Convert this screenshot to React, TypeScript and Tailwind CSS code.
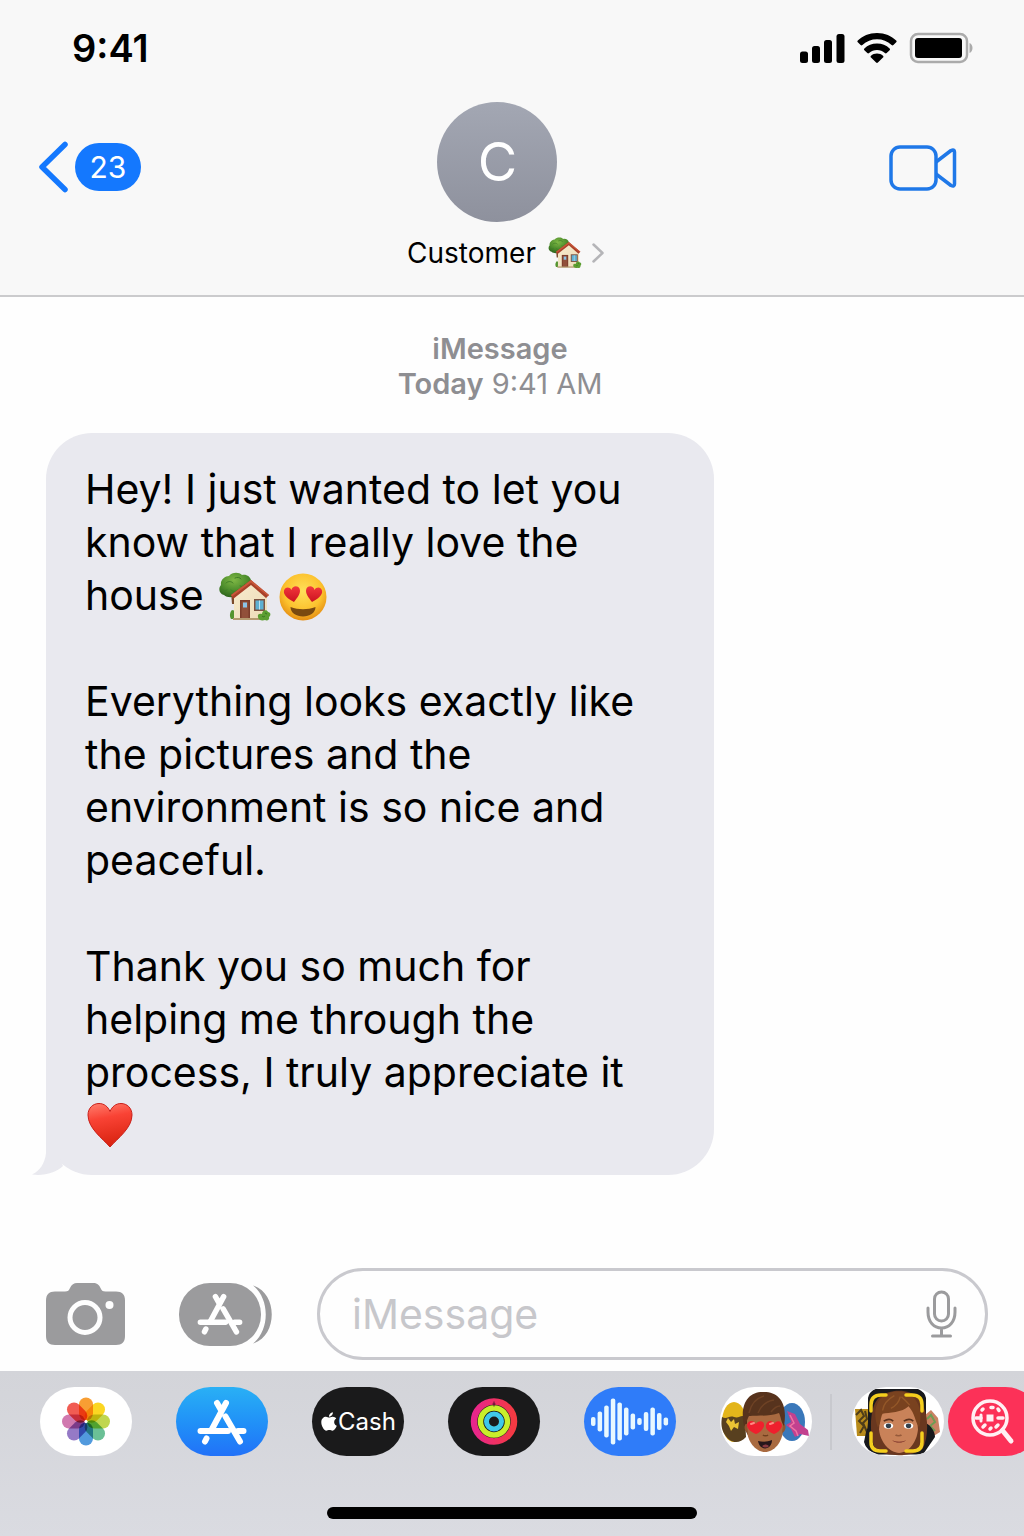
import React, { useState } from 'react';
import { FaApple } from 'react-icons/fa';

interface IconProps {
    className?: string;
}

const contact = {
    name: 'Customer',
    initial: 'C',
    unread: 23
};

const HouseEmoji: React.FC<IconProps> = ({ className }) => (
    <svg viewBox="0 0 52 50" className={className} role="img" aria-label="house with garden">
        <defs>
            <radialGradient id="tree" cx="45%" cy="30%" r="70%">
                <stop offset="0" stopColor="#7fb845" />
                <stop offset="0.6" stopColor="#4d8d2c" />
                <stop offset="1" stopColor="#2f661d" />
            </radialGradient>
            <linearGradient id="wall" x1="0" y1="0" x2="1" y2="1">
                <stop offset="0" stopColor="#f8ebcd" />
                <stop offset="1" stopColor="#ecdcb8" />
            </linearGradient>
        </defs>
        <path d="M12 20h6v12h-5z" fill="#7a4a2b" />
        <path d="M5 23C0 22-1 16 2 13 1 8 6 4 10 4c3-4 10-4 13-1 5-1 8 2 9 5 2 5 0 9-4 11-2 4-7 5-10 4-3 3-10 3-13 0z" fill="url(#tree)" />
        <path d="M7 11c2-2 5-2 7 0M16 6c2-1 5-1 6 1M12 18c2 2 5 2 7 0M21 14c2 1 4 0 5-2M4 18c1 1 3 1 4 0" fill="none" stroke="#3f7d27" strokeLinecap="round" />
        <path d="M12 47c-2-3-1-7 1-9l4 1v8z" fill="#55952f" />
        <path d="M15 24 32 10l16 14v23H15z" fill="url(#wall)" />
        <path d="M32 8 12 23l2 4 18-14 15 13 3-3z" fill="#a84029" />
        <path d="M32 8 12 23l1 1.500L32 10.500l17 13.500 1-1z" fill="#c9573a" />
        <path d="M21 28h10v19H21z" fill="#7b3d2b" />
        <path d="M22.500 29.500h7V46h-7z" fill="#91503a" />
        <path d="M24 30.500h4v5h-4z" fill="#8bc4e8" />
        <path d="M35 27h11v12H35z" fill="#7d5442" />
        <path d="M36.500 28.500h8v9h-8z" fill="#5eb0d2" />
        <path d="M40.500 28.500v9" stroke="#d6eef6" strokeWidth="0.8" />
        <path d="M14 46h35v2H14z" fill="#b49b70" />
        <path d="M39 45c-1-3 2-4 4-3 0-4 5-5 6-2 3 0 3 4 1 5 1 3-2 4-4 3-3 1-7 0-7-3z" fill="#5c9e31" />
        <path d="M43 44c1 1 2 1 3 0M46 41l2 1" fill="none" stroke="#377420" />
    </svg>
);

const HeartEyesEmoji: React.FC<IconProps> = ({ className }) => (
    <svg viewBox="0 0 48 48" className={className} role="img" aria-label="smiling face with heart eyes">
        <defs>
            <radialGradient id="face" cx="50%" cy="38%" r="62%">
                <stop offset="0" stopColor="#ffe05a" />
                <stop offset="0.65" stopColor="#fcc22e" />
                <stop offset="1" stopColor="#e58e13" />
            </radialGradient>
            <linearGradient id="eye" x1="0" y1="0" x2="0" y2="1">
                <stop offset="0" stopColor="#f2383c" />
                <stop offset="1" stopColor="#cc1220" />
            </linearGradient>
        </defs>
        <circle cx="24" cy="24" r="23.500" fill="url(#face)" />
        <path d="M15 29C9 26 4 22 5 17.500 6 14 10.500 13.500 12.500 17c.8-4 6-5 8-1.500C22.500 20 18 25 15 29z" fill="url(#eye)" />
        <path d="M33 29c6-3 11-7 10-11.500-1-3.500-5.500-4-7.500-.5-.8-4-6-5-8-1.500C25.500 20 30 25 33 29z" fill="url(#eye)" />
        <path d="M11.500 34c8 3 17 3 25 0 0 6-6 9.500-12.500 9.500S11.500 40 11.500 34z" fill="#7a4a10" />
    </svg>
);

const HeartEmoji: React.FC<IconProps> = ({ className }) => (
    <svg viewBox="0 0 46 46" className={className} role="img" aria-label="red heart">
        <defs>
            <linearGradient id="heart" x1="0.2" y1="0" x2="0.4" y2="1">
                <stop offset="0" stopColor="#ff7a6a" />
                <stop offset="0.35" stopColor="#f94335" />
                <stop offset="1" stopColor="#d8220f" />
            </linearGradient>
        </defs>
        <path d="M23 45C15 36 1 26 1 13 1 6 6 1.500 12 1.500c5 0 9 3 11 8 2-5 6-8 11-8 6 0 11 4.500 11 11.500 0 13-14 23-22 32z" fill="url(#heart)" stroke="#c9201a" strokeWidth="1" />
    </svg>
);

const AppStoreGlyph: React.FC<IconProps> = ({ className }) => (
    <svg viewBox="0 0 50 46" className={className} fill="none" stroke="currentColor" strokeWidth="6" strokeLinecap="round" aria-hidden="true">
        <path d="M29 4 14.500 31M20 4l4 7M28.500 17.500 43 42.500M9.500 39.500 8 42.500" />
        <path d="M3.500 32H31M41 32h5.500" />
    </svg>
);

const StatusBar: React.FC = () => (
    <div className="flex h-24 items-center justify-between pl-[72px] pr-[51px]">
        <span className="text-[38px] font-semibold leading-10">9:41</span>
        <div className="flex items-center gap-3">
            <svg viewBox="0 0 45 30" className="h-[30px] w-[45px]" aria-label="Signal">
                <rect x="0" y="18.500" width="8" height="11.500" rx="2.500" />
                <rect x="12" y="13" width="8" height="17" rx="2.500" />
                <rect x="24" y="7" width="8" height="23" rx="2.500" />
                <rect x="36.500" y="1" width="8" height="29" rx="2.500" />
            </svg>
            <svg viewBox="0 0 40 30" className="h-[30px] w-10" aria-label="Wi-Fi">
                <path d="M20 0C12 0 5.500 3 .8 7.500c-.6.600-.6 1.200 0 1.800L3.600 12c.6.500 1.200.5 1.800 0C9.500 8.300 14.500 6.300 20 6.300s10.500 2 14.600 5.700c.6.500 1.200.5 1.800 0l2.800-2.700c.6-.6.600-1.200 0-1.800C34.500 3 28 0 20 0z" />
                <path d="M20 10.500c-5 0-9.300 1.800-12.600 4.900-.6.600-.6 1.200 0 1.800l2.900 2.800c.6.500 1.200.5 1.800 0 2.200-2 4.900-3.100 7.900-3.100s5.700 1.100 7.900 3.100c.6.500 1.200.5 1.800 0l2.900-2.800c.6-.6.600-1.200 0-1.800-3.300-3.100-7.600-4.900-12.600-4.900z" />
                <path d="M20 20.500c-2.400 0-4.500.9-6 2.300-.6.600-.6 1.200 0 1.700l5.100 5c.6.600 1.200.6 1.800 0l5.100-5c.6-.5.600-1.100 0-1.700-1.500-1.400-3.600-2.300-6-2.300z" />
            </svg>
            <svg viewBox="0 0 64 32" className="h-8 w-16" aria-label="Battery">
                <rect x="2" y="2" width="56" height="28" rx="7" fill="none" stroke="#ababab" strokeWidth="2.500" />
                <rect x="6" y="6" width="47" height="20" rx="3" />
                <path d="M60.500 11c4 1.500 4 8.500 0 10z" fill="#ababab" />
            </svg>
        </div>
    </div>
);

const ChatHeader: React.FC = () => (
    <header className="border-b-2 border-[#cbcbcd] bg-[#f8f8f8]">
        <StatusBar />
        <div className="grid grid-cols-[1fr_auto_1fr] pb-6 pl-[38px] pr-[67px] pt-1.5">
            <button type="button" className="flex h-[130px] items-center gap-[7px] justify-self-start" aria-label={`Back, ${contact.unread} unread`}>
                <svg viewBox="0 0 30 52" className="h-[52px] w-[30px]" fill="none" stroke="#1478fe" strokeWidth="5.500" strokeLinecap="round" strokeLinejoin="round" aria-hidden="true">
                    <path d="M27 3.500 4 26l23 22.500" />
                </svg>
                <span className="flex h-12 w-[66px] items-center justify-center rounded-full bg-[#1478fe] text-[30px] leading-9 text-white">
                    {contact.unread}
                </span>
            </button>
            <div className="flex flex-col items-center">
                <div className="flex h-[120px] w-[120px] items-center justify-center rounded-full bg-linear-to-b from-[#a3a7b3] to-[#8e919d] text-[54px] leading-none text-white">
                    {contact.initial}
                </div>
                <button type="button" className="mt-[13px] flex items-center pl-4 text-[28px] leading-9">
                    {contact.name}
                    <HouseEmoji className="ml-3 h-8 w-[34px]" />
                    <svg viewBox="0 0 12 20" className="ml-2.5 h-5 w-3" fill="none" stroke="#b5b5b8" strokeWidth="2.500" strokeLinecap="round" strokeLinejoin="round" aria-hidden="true">
                        <path d="m1.500 1.500 9 8.500-9 8.500" />
                    </svg>
                </button>
            </div>
            <button type="button" className="flex h-[132px] items-center justify-self-end" aria-label="FaceTime">
                <svg viewBox="0 0 68 46" className="h-[46px] w-[68px]" fill="none" stroke="#1f78e8" strokeWidth="3.500" strokeLinejoin="round" aria-hidden="true">
                    <rect x="2" y="2" width="45" height="42" rx="9" />
                    <path d="m47 17 15-11.500q3.500-1.500 3.500 1.500v32q0 3-3.500 1.500L47 29" />
                </svg>
            </button>
        </div>
    </header>
);

const MessageBubble: React.FC<{ children: React.ReactNode }> = ({ children }) => (
    <div className="relative flex w-fit max-w-[668px] flex-col gap-[53px] rounded-[46px] bg-[#e9e9ef] pb-[23px] pl-[39px] pr-[60px] pt-[30px] text-[41px] leading-[53px]">
        <svg viewBox="0 0 32 50" className="absolute -left-3.5 bottom-0 h-[50px] w-8" aria-hidden="true">
            <path d="M14 0v28C13 38 8 46 0 49.500 12 51 24 48 31 41z" fill="#e9e9ef" />
        </svg>
        {children}
    </div>
);

const Composer: React.FC = () => {
    const [text, setText] = useState('');

    return (
        <form className="flex items-center gap-[45px] pb-[11px] pl-[46px] pr-9" onSubmit={(e) => e.preventDefault()}>
            <div className="flex items-center gap-[54px]">
                <button type="button" aria-label="Camera">
                    <svg viewBox="0 0 79 62" className="h-[62px] w-[79px]" aria-hidden="true">
                        <path d="M9 8.500h10c3 0 4-1 5-3.500C25.500 1.500 28 0 31 0h16c4 0 6 1.500 7.500 5 1 2.500 2 3.500 5 3.500H70c6 0 9 3 9 9V53c0 6-3 9-9 9H9c-6 0-9-3-9-9V17.500c0-6 3-9 9-9z" fill="#9b9b9d" />
                        <circle cx="39" cy="34.500" r="15" fill="none" stroke="#fefefe" strokeWidth="5" />
                        <circle cx="63.500" cy="22" r="4" fill="#fefefe" />
                    </svg>
                </button>
                <button type="button" className="relative" aria-label="Apps">
                    <svg viewBox="0 0 93 63" className="h-[63px] w-[93px]" fill="#9b9b9d" aria-hidden="true">
                        <rect width="82" height="63" rx="31" />
                        <path d="M74 2.500C99 10 99 53 74 60.500 91 47 91 16 74 2.500z" />
                    </svg>
                    <AppStoreGlyph className="absolute left-[17px] top-2.5 h-[42px] w-[48px] text-white" />
                </button>
            </div>
            <div className="flex h-[92px] min-w-0 flex-1 items-center rounded-full border-[3px] border-[#c9c9ce] pl-8 pr-7">
                <input
                    type="text"
                    aria-label="Message"
                    placeholder="iMessage"
                    value={text}
                    onChange={(e) => setText(e.target.value)}
                    className="min-w-0 flex-1 bg-transparent text-[41px] leading-[53px] outline-none placeholder:text-[#c7c7cb]"
                />
                <button type="button" aria-label="Dictate">
                    <svg viewBox="0 0 31 48" className="h-12 w-[31px]" fill="none" stroke="#9b9b9d" strokeWidth="3" strokeLinecap="round" aria-hidden="true">
                        <rect x="8.500" y="2" width="14" height="29" rx="7" />
                        <path d="M2 18v4c0 10 6 16 13.500 16S29 32 29 22v-4M15.500 38v8M6.500 46h18" />
                    </svg>
                </button>
            </div>
        </form>
    );
};

const petals = ['#f7941d', '#fbd10a', '#b9d23c', '#5bb98b', '#3f8fd9', '#8a6cc0', '#cc6aa6', '#ef4a40'];

const PhotosIcon: React.FC = () => (
    <svg viewBox="0 0 92 69" className="isolate h-full w-full" aria-hidden="true">
        {petals.map((color, index) => (
            <rect
                key={color}
                className="mix-blend-multiply"
                x="39"
                y="10.500"
                width="14"
                height="23"
                rx="7"
                fill={color}
                fillOpacity="0.9"
                transform={`rotate(${index * 45} 46 34.500)`}
            />
        ))}
        <circle cx="46" cy="34.500" r="1.500" fill="#fff" />
    </svg>
);

const FitnessIcon: React.FC = () => (
    <svg viewBox="0 0 92 69" className="h-full w-full" fill="none" aria-hidden="true">
        <defs>
            <linearGradient id="move" x1="0" y1="0" x2="1" y2="0">
                <stop offset="0" stopColor="#e8268c" />
                <stop offset="1" stopColor="#f43a42" />
            </linearGradient>
        </defs>
        <circle cx="46" cy="34.500" r="20" stroke="url(#move)" strokeWidth="6.500" />
        <circle cx="46" cy="34.500" r="13.500" stroke="#c9ee2b" strokeWidth="5.500" />
        <circle cx="46" cy="34.500" r="7.500" stroke="#3fc8ea" strokeWidth="5" />
        <path d="M46 14.500v5M44.500 17h3" stroke="#5b1030" />
    </svg>
);

const waveHeights = [9, 20, 32, 46, 38, 28, 16, 7, 19, 28, 17, 8];

const AudioIcon: React.FC = () => (
    <svg viewBox="0 0 92 69" className="h-full w-full" fill="#e8f8ff" aria-hidden="true">
        {waveHeights.map((height, index) => (
            <rect key={index} x={7 + index * 6.6} y={34.5 - height / 2} width="4.500" height={height} rx="2" />
        ))}
    </svg>
);

const MemojiIcon: React.FC = () => (
    <svg viewBox="0 0 92 69" className="h-full w-full" aria-hidden="true">
        <ellipse cx="14" cy="35" rx="12" ry="20" fill="#e3b51b" />
        <path d="M2 30c5 3 7-2 12 0s7-3 11 0l1 20c-7 8-16 6-21-2-4-6-4-12-3-18z" fill="#58401f" />
        <path d="m6 35 2-4 3 4 3-3 1 5 4-2-1 7-4-2-3 4-2-5z" fill="#ecc334" />
        <ellipse cx="72" cy="35" rx="13" ry="19" fill="#3a78ba" />
        <path d="M67 24l8 3 5 10 8 6 1 6-9-2-5 3-4-8-5-4 5-3z" fill="#c2418f" />
        <path d="m70 28 4 8-4 3 6 5 2 5" fill="none" stroke="#ee74a5" strokeWidth="1.500" />
        <ellipse cx="44" cy="34" rx="20" ry="24" fill="#4b2b18" />
        <path d="M27 29c1-14 34-15 36 0v13c0 13-9 23-18 23S27 55 27 42z" fill="#a96a40" />
        <path d="M27 37c-3-2-4 7 1 9zM63 37c3-2 4 7-1 9z" fill="#91552f" />
        <path d="M24 39C19 15 30 4 44 5c15 0 24 11 20 34-3-4-3-9-5-13-10 4-25 2-30 3-2 3-2 7-5 10z" fill="#57331d" />
        <path d="M29 26c2-9 8-15 15-17M38 26c3-7 8-12 16-13M51 25c3-4 6-6 9-6" fill="none" stroke="#6e4225" strokeWidth="1.500" />
        <path d="M36 47c-5-2-9-5-9-9 1-5 7-5 9-1 2-4 9-4 8 2-1 4-5 7-8 8zM54 47c-5-2-9-5-8-9 1-5 7-5 8-1 2-4 8-4 8 2-1 4-5 7-8 8z" fill="#ef1f2d" />
        <path d="M31 37l3-1M50 37l3-1" stroke="#ff8a84" strokeWidth="2" strokeLinecap="round" />
        <path d="M43 48c1 1 4 1 5 0" fill="none" stroke="#71401f" strokeWidth="1.500" />
        <path d="M38 54c5 1 9 1 14-1 0 10-12 12-14 1z" fill="#28171b" />
        <path d="M42 59c3-2 5-2 7 0-2 2-5 2-7 0z" fill="#8a3a42" />
    </svg>
);

const MemojiCameraIcon: React.FC = () => (
    <svg viewBox="0 0 92 69" className="h-full w-full" aria-hidden="true">
        <path d="M3 22h13v27H5z" fill="#b88b1b" />
        <path d="M4 28l5-5 3 6-5 5 5 5-4 7M13 24l2 8-4 4 4 9" fill="none" stroke="#4e3d1a" strokeWidth="2" />
        <path d="M73 28l6-5 7 8 2 14-8 5-7-7z" fill="#c98263" />
        <path d="m75 32 4-4 4 7-5 4 5 5" fill="none" stroke="#6e9c54" strokeWidth="2" />
        <path d="M23 2h43q7 3 8 9v25c5 3 9 8 9 14L72 66q-6 2-10 1.500H26Q14 64 12 55l2-10q2-4 2-10V11q1-6 7-9z" fill="#18191d" />
        <g transform="translate(-6 -3) scale(1.18 1.06)">
            <path d="M25 62C19 48 20 20 28 13c8-9 26-9 33 0 9 10 10 35 4 48-9 8-30 8-40 1z" fill="#69371f" />
            <path d="M29 29c1-14 30-14 31 0l1 14c-1 12-8 22-16 22S29 55 28 43z" fill="#c98259" />
            <path d="M27 41C21 22 28 8 43 7c17-1 23 17 19 34-4-7-3-12-9-20-5 6-17 6-22 7-2 4-1 8-4 13z" fill="#79421f" />
            <path d="M31 25c1-7 5-11 10-14M38 23c4-2 7-6 8-11M54 20c-3-4-5-6-7-8" fill="none" stroke="#935728" strokeWidth="1.200" />
            <path d="M32 35c3-2 6-2 8 0M49 35c3-2 6-2 8 0" fill="none" stroke="#5c321d" strokeWidth="1.500" />
            <ellipse cx="36" cy="39.500" rx="4" ry="2.800" fill="#fff" />
            <ellipse cx="53" cy="39.500" rx="4" ry="2.800" fill="#fff" />
            <circle cx="36" cy="39.500" r="2.300" fill="#33404b" />
            <circle cx="53" cy="39.500" r="2.300" fill="#33404b" />
            <path d="M42 48c1 1 4 1 5 0" fill="none" stroke="#965a3b" strokeWidth="1.500" />
            <path d="M39 53c4 2 8 2 12 0-3 3-9 3-12 0z" fill="#6f2422" />
        </g>
        <path d="M19 24v-6q0-10 10-10h5M54 8h6q10 0 10 10v6M19 46v9q0 9 9 9h6M54 64h7q9 0 9-9v-9" fill="none" stroke="#f4ce1e" strokeWidth="3.500" strokeLinecap="round" />
    </svg>
);

const ImageSearchIcon: React.FC = () => (
    <svg viewBox="0 0 92 69" className="h-full w-full" fill="none" stroke="#fff0f3" strokeLinecap="round" aria-hidden="true">
        <circle cx="42" cy="31" r="17" strokeWidth="3.500" />
        <path d="M54.500 43.500 63 54" strokeWidth="5" />
        <path d="M43 20.500h2M35 22l-1 1M50 22l1 1.500M28 31h5M50 31h5M35 40l2-2M42 42l1-1M50 38l-2 2" strokeWidth="3.500" />
        <path d="M40 29h4v4h-4zM33 28v6" strokeWidth="3" fill="#fff0f3" />
    </svg>
);

interface AppPillProps {
    label: string;
    className: string;
    children: React.ReactNode;
}

const AppPill: React.FC<AppPillProps> = ({ label, className, children }) => (
    <button
        type="button"
        aria-label={label}
        className={`flex h-[69px] w-[92px] shrink-0 items-center justify-center overflow-hidden rounded-full ${className}`}
    >
        {children}
    </button>
);

const AppDrawer: React.FC = () => (
    <footer className="overflow-hidden bg-linear-to-b from-[#d3d4d9] to-[#dadbe1] pb-[17px] pt-4">
        <div className="flex items-center pl-10">
            <div className="flex shrink-0 items-center gap-11">
                <AppPill label="Photos" className="bg-white">
                    <PhotosIcon />
                </AppPill>
                <AppPill label="App Store" className="bg-linear-to-b from-[#2ab0f5] to-[#2271f8] text-white">
                    <AppStoreGlyph className="h-[46px] w-[50px]" />
                </AppPill>
                <AppPill label="Apple Cash" className="bg-[#1a1a1b] text-[24px] leading-8 text-white">
                    <FaApple className="h-[21px] w-[18px]" />
                    Cash
                </AppPill>
                <AppPill label="Fitness" className="bg-[#1a1a1b]">
                    <FitnessIcon />
                </AppPill>
                <AppPill label="Audio" className="bg-[#2f7cf9]">
                    <AudioIcon />
                </AppPill>
                <AppPill label="Memoji stickers" className="bg-white">
                    <MemojiIcon />
                </AppPill>
            </div>
            <div className="ml-[18px] mr-5 h-14 w-0.5 shrink-0 bg-[#c8c9ce]" />
            <div className="flex shrink-0 items-center gap-1">
                <AppPill label="Memoji" className="bg-white">
                    <MemojiCameraIcon />
                </AppPill>
                <AppPill label="Images" className="bg-[#fc3158]">
                    <ImageSearchIcon />
                </AppPill>
            </div>
        </div>
        <div className="mx-auto mt-[51px] h-3 w-[370px] rounded-full bg-black" />
    </footer>
);

export default function App() {
    return (
        <div className="flex min-h-screen flex-col bg-[#fefefe] font-['Inter','Liberation_Sans',sans-serif] text-black">
            <ChatHeader />
            <main className="flex-1 px-[46px] pb-10 pt-[34px]">
                <div className="mb-8 pr-6 text-center text-[29px] leading-[35px] text-[#8e8e92]">
                    <div className="font-semibold">iMessage</div>
                    <div>
                        <span className="font-semibold">Today</span> 9:41 AM
                    </div>
                </div>
                <MessageBubble>
                    <p>
                        Hey! I just wanted to let you know that I really love the house{' '}
                        <HouseEmoji className="ml-1 inline-block h-[50px] w-[52px] align-[-12px]" />{' '}
                        <HeartEyesEmoji className="-ml-1 inline-block h-12 w-12 align-[-11px]" />
                    </p>
                    <p>Everything looks exactly like the pictures and the environment is so nice and peaceful.</p>
                    <p>
                        Thank you so much for helping me through the process, I truly appreciate it{' '}
                        <HeartEmoji className="ml-0.5 inline-block h-[46px] w-[46px] align-[-8px]" />
                    </p>
                </MessageBubble>
            </main>
            <Composer />
            <AppDrawer />
        </div>
    );
}
